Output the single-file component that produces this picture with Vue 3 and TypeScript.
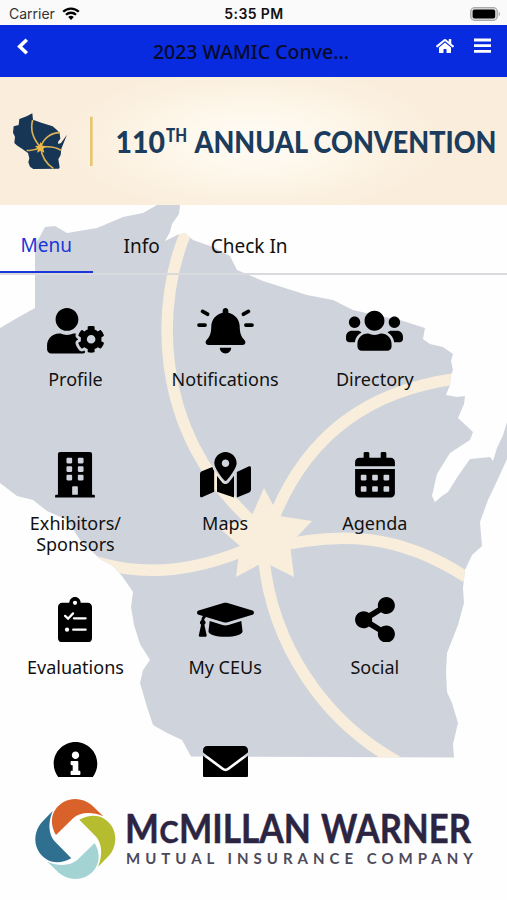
<script setup lang="ts">
interface Tile {
  label: string
  width: number
  box: string
  paths?: string[]
  kind?: 'bell' | 'clipboard'
}

const square = (x: number, y: number): string =>
  `M${x} ${y + 12}c0-6.6 5.4-12 12-12h40c6.6 0 12 5.4 12 12v40c0 6.6-5.4 12-12 12h-40c-6.6 0-12-5.4-12-12z`

const calendar =
  'M0 464c0 26.5 21.5 48 48 48h352c26.5 0 48-21.5 48-48V192H0z' +
  [64, 192, 320].map((x) => square(x, 256) + square(x, 384)).join('') +
  'M400 64h-48V16c0-8.8-7.2-16-16-16h-32c-8.8 0-16 7.2-16 16v48H160V16c0-8.8-7.2-16-16-16h-32c-8.8 0-16 7.2-16 16v48H48C21.5 64 0 85.5 0 112v48h448v-48c0-26.5-21.5-48-48-48z'

const building =
  'M436 480h-20V24c0-13.255-10.745-24-24-24H56C42.745 0 32 10.745 32 24v456H12c-6.627 0-12 5.373-12 12v20h448v-20c0-6.627-5.373-12-12-12z' +
  'M256 480h-64v-84c0-6.627 5.373-12 12-12h40c6.627 0 12 5.373 12 12v84z' +
  [64, 160, 256].map((y) => square(128, y) + square(256, y)).join('')

const tiles: Tile[] = [
  {
    label: 'Profile',
    width: 57,
    box: '0 0 640 512',
    paths: [
      'M610.5 373.3c2.6-14.1 2.6-28.5 0-42.6l25.8-14.9c3-1.7 4.3-5.2 3.3-8.5-6.7-21.6-18.2-41.2-33.2-57.4-2.3-2.5-6-3.1-9-1.4l-25.8 14.9c-10.9-9.3-23.4-16.5-36.9-21.3v-29.8c0-3.4-2.4-6.4-5.7-7.1-22.3-5-45-4.8-66.2 0-3.3.7-5.7 3.7-5.7 7.1v29.8c-13.5 4.8-26 12-36.9 21.3l-25.8-14.9c-2.9-1.7-6.7-1.1-9 1.4-15 16.2-26.5 35.8-33.2 57.4-1 3.3.4 6.8 3.3 8.5l25.8 14.9c-2.6 14.1-2.6 28.5 0 42.6l-25.8 14.9c-3 1.7-4.3 5.2-3.3 8.5 6.7 21.6 18.2 41.1 33.2 57.4 2.3 2.5 6 3.1 9 1.4l25.8-14.9c10.9 9.3 23.4 16.5 36.9 21.3v29.8c0 3.4 2.4 6.4 5.7 7.1 22.3 5 45 4.8 66.2 0 3.3-.7 5.7-3.7 5.7-7.1v-29.8c13.5-4.8 26-12 36.9-21.3l25.8 14.9c2.9 1.7 6.7 1.1 9-1.4 15-16.2 26.5-35.8 33.2-57.4 1-3.3-.4-6.8-3.3-8.5l-25.8-14.9zM496 400.5c-26.8 0-48.5-21.8-48.5-48.5s21.8-48.5 48.5-48.5 48.5 21.8 48.5 48.5-21.7 48.5-48.5 48.5z',
      'M224 256c70.7 0 128-57.3 128-128S294.7 0 224 0 96 57.3 96 128s57.3 128 128 128zm201.2 226.5c-2.3-1.2-4.6-2.6-6.8-3.9l-7.9 4.6c-6 3.4-12.8 5.3-19.6 5.3-10.9 0-21.4-4.6-28.9-12.6-18.3-19.8-32.3-43.9-40.2-69.6-5.5-17.7 1.9-36.4 17.9-45.7l7.9-4.6c-.1-2.6-.1-5.2 0-7.8l-7.9-4.6c-16-9.2-23.4-28-17.9-45.7.9-2.9 2.2-5.8 3.2-8.7-3.8-.3-7.5-1.2-11.4-1.2h-16.7c-22.2 10.2-46.9 16-72.9 16s-50.6-5.8-72.9-16h-16.7C60.2 288 0 348.2 0 422.4V464c0 26.5 21.5 48 48 48h352c10.1 0 19.5-3.2 27.2-8.5-1.2-3.8-2-7.7-2-11.8v-9.2z',
    ],
  },
  { label: 'Notifications', width: 57, box: '0 0 640 512', kind: 'bell' },
  {
    label: 'Directory',
    width: 57,
    box: '0 0 640 512',
    paths: [
      'M96 224c35.3 0 64-28.7 64-64s-28.7-64-64-64-64 28.7-64 64 28.7 64 64 64zm448 0c35.3 0 64-28.7 64-64s-28.7-64-64-64-64 28.7-64 64 28.7 64 64 64zm32 32h-64c-17.6 0-33.5 7.1-45.1 18.6 40.3 22.1 68.9 62 75.1 109.4h66c17.7 0 32-14.3 32-32v-32c0-35.3-28.7-64-64-64zm-256 0c61.9 0 112-50.1 112-112S381.9 32 320 32 208 82.1 208 144s50.1 112 112 112zm76.8 32h-8.3c-20.8 10-43.9 16-68.5 16s-47.6-6-68.5-16h-8.3C179.6 288 128 339.6 128 403.2V432c0 26.5 21.5 48 48 48h288c26.5 0 48-21.5 48-48v-28.8c0-63.6-51.6-115.2-115.2-115.2zm-223.7-13.4C161.5 263.1 145.6 256 128 256H64c-35.3 0-64 28.7-64 64v32c0 17.7 14.3 32 32 32h65.9c6.3-47.4 34.9-87.3 75.2-109.4z',
    ],
  },
  { label: 'Exhibitors/\nSponsors', width: 40, box: '0 0 448 512', paths: [building] },
  {
    label: 'Maps',
    width: 51,
    box: '0 0 576 512',
    paths: [
      'M288 0c-69.59 0-126 56.41-126 126 0 56.26 82.35 158.8 113.9 196.02 6.39 7.54 17.82 7.54 24.2 0C331.65 284.8 414 182.26 414 126 414 56.41 357.59 0 288 0zm0 168c-23.2 0-42-18.8-42-42s18.8-42 42-42 42 18.8 42 42-18.8 42-42 42zM20.12 215.95A32.006 32.006 0 0 0 0 245.66v250.32c0 11.32 11.43 19.06 21.94 14.86L160 448V214.92c-8.84-15.98-16.07-31.54-21.25-46.42L20.12 215.95zM288 359.67c-14.07 0-27.38-6.18-36.51-16.96-19.66-23.2-40.57-49.62-59.49-76.72v182l192 64V266c-18.92 27.09-39.82 53.52-59.49 76.72-9.13 10.77-22.44 16.95-36.51 16.95zm266.06-198.51L416 224v288l139.88-55.95A31.996 31.996 0 0 0 576 426.34V176.02c0-11.32-11.43-19.06-21.94-14.86z',
    ],
  },
  { label: 'Agenda', width: 40, box: '0 0 448 512', paths: [calendar] },
  { label: 'Evaluations', width: 34, box: '0 0 384 512', kind: 'clipboard' },
  {
    label: 'My CEUs',
    width: 57,
    box: '0 0 640 512',
    paths: [
      'M622.34 153.2L343.4 67.5c-15.2-4.67-31.6-4.67-46.79 0L17.66 153.2c-23.54 7.23-23.54 38.36 0 45.59l48.63 14.94c-10.67 13.19-17.23 29.28-17.88 46.9C38.78 266.15 32 276.11 32 288c0 10.78 5.68 19.85 13.86 25.65L20.33 428.53C18.11 438.52 25.71 448 35.94 448h56.11c10.24 0 17.84-9.48 15.62-19.47L82.14 313.65C90.32 307.85 96 298.78 96 288c0-11.57-6.47-21.25-15.66-26.87.76-15.02 8.44-28.3 20.69-36.72L296.6 284.5c9.06 2.78 26.44 6.25 46.79 0l278.95-85.7c23.55-7.24 23.55-38.36 0-45.6zM352.79 315.09c-28.53 8.76-52.84 3.92-65.59 0l-145.02-44.55L128 384c0 35.35 85.96 64 192 64s192-28.65 192-64l-14.18-113.47-145.03 44.56z',
    ],
  },
  {
    label: 'Social',
    width: 40,
    box: '0 0 448 512',
    paths: [
      'M352 320c-22.608 0-43.387 7.819-59.79 20.895l-102.486-64.054a96.551 96.551 0 0 0 0-41.683l102.486-64.054C308.613 184.181 329.392 192 352 192c53.019 0 96-42.981 96-96S405.019 0 352 0s-96 42.981-96 96c0 7.158.79 14.13 2.276 20.841L155.79 180.895C139.387 167.819 118.608 160 96 160c-53.019 0-96 42.981-96 96s42.981 96 96 96c22.608 0 43.387-7.819 59.79-20.895l102.486 64.054A96.301 96.301 0 0 0 256 416c0 53.019 42.981 96 96 96s96-42.981 96-96-42.981-96-96-96z',
    ],
  },
  {
    label: '',
    width: 45,
    box: '0 0 512 512',
    paths: [
      'M256 8C119.043 8 8 119.083 8 256c0 136.997 111.043 248 248 248s248-111.003 248-248C504 119.083 392.957 8 256 8zm0 110c23.196 0 42 18.804 42 42s-18.804 42-42 42-42-18.804-42-42 18.804-42 42-42zm56 254c0 6.627-5.373 12-12 12h-88c-6.627 0-12-5.373-12-12v-24c0-6.627 5.373-12 12-12h12v-64h-12c-6.627 0-12-5.373-12-12v-24c0-6.627 5.373-12 12-12h64c6.627 0 12 5.373 12 12v100h12c6.627 0 12 5.373 12 12v24z',
    ],
  },
  {
    label: '',
    width: 45,
    box: '0 0 512 512',
    paths: [
      'M48 54C21.5 54 0 75.500 0 102v18c0 6 3 11 8 15L236.800 303.600c11.400 8.500 27 8.500 38.400 0L504 135c5-4 8-9 8-15v-18c0-26.500-21.500-48-48-48H48zM0 166V384c0 35.300 28.700 64 64 64H448c35.300 0 64-28.700 64-64V166L294.400 327.200c-22.800 17.100-54 17.100-76.800 0L0 166z',
    ],
  },
]

const swirl = [
  { color: '#d9622b', turn: 0 },
  { color: '#b5bd2e', turn: 90 },
  { color: '#a3d3d3', turn: 180 },
  { color: '#2f6f8f', turn: 270 },
]
</script>

<template>
  <div class="screen">
    <div class="status">
      <div class="carrier">
        <span>Carrier</span>
        <svg class="wifi" viewBox="0 0 18 13">
          <path d="M9 13 6.200 10.100a4 4 0 0 1 5.600 0z" />
          <path class="arc" d="M4 7.800a7.100 7.100 0 0 1 10 0M1.200 4.800a11 11 0 0 1 15.600 0" />
        </svg>
      </div>
      <div class="clock">5:35 PM</div>
      <svg class="battery" viewBox="0 0 31 14">
        <rect x=".7" y=".7" width="26.600" height="12.600" rx="4" fill="#ddd" stroke="#aaa" stroke-width="1.300" />
        <rect x="2.600" y="2.600" width="22.600" height="8.800" rx="2" />
        <path d="M28.700 4.500q2.500 2.500 0 5z" fill="#aaa" />
      </svg>
    </div>

    <header class="bar">
      <svg class="back" viewBox="0 0 13 17"><path d="M10.800 1.800 3.700 8.500l7.100 6.700" /></svg>
      <h1>2023 WAMIC Conve...</h1>
      <svg class="home" viewBox="0 0 576 512">
        <path
          d="M280.37 148.26L96 300.11V464a16 16 0 0 0 16 16l112.06-.29a16 16 0 0 0 15.92-16V368a16 16 0 0 1 16-16h64a16 16 0 0 1 16 16v95.64a16 16 0 0 0 16 16.05L464 480a16 16 0 0 0 16-16V300L295.67 148.26a12.19 12.19 0 0 0-15.3 0zM571.6 251.47L488 182.56V44.05a12 12 0 0 0-12-12h-56a12 12 0 0 0-12 12v72.61L318.47 43a48 48 0 0 0-61 0L4.34 251.47a12 12 0 0 0-1.600 16.900l25.500 31A12 12 0 0 0 45.150 301l235.220-193.740a12.190 12.190 0 0 1 15.300 0L530.900 301a12 12 0 0 0 16.900-1.600l25.500-31a12 12 0 0 0-1.700-16.930z"
        />
      </svg>
      <svg class="bars" viewBox="0 0 17 14">
        <path d="M0 1.500h17M0 7.200h17M0 12.900h17" />
      </svg>
    </header>

    <section class="banner">
      <svg viewBox="0 0 507 128">
        <g transform="translate(0 3) scale(.3333)">
          <path
            d="M41 139 56 135 58 117 80 109 97 100 99 119 124 128 158 139 171 150 179 160 181 176 174 186 175 192 183 189 201 164 193 184 184 206 182 225 175 238 179 262 177 266 100 267 90 260 85 247 88 235 84 219 66 206 52 197 43 189 45 170 39 158z"
            fill="#173656"
          />
          <path
            d="M98 120C90 150 100 178 122 202M122 202C130 175 152 158 180 158M80 211C96 213 110 209 122 202C142 199 166 200 183 211M122 202C125 228 140 252 160 265"
            fill="none"
            stroke="#dcb155"
            stroke-width="5"
          />
          <path d="m122 186 5 11 11 1-8 8 3 12-11-6-11 6 3-12-9-8 12-1z" fill="#efb949" />
          <rect x="270" y="110" width="8" height="148" fill="#e9c56f" />
        </g>
        <text x="115.500" y="75.500" font-size="30.500" textLength="49.500" lengthAdjust="spacingAndGlyphs">110</text>
        <text x="166" y="65" font-size="18" textLength="21" lengthAdjust="spacingAndGlyphs">TH</text>
        <text x="194.500" y="75.500" font-size="30.500" textLength="302" lengthAdjust="spacingAndGlyphs">ANNUAL CONVENTION</text>
      </svg>
    </section>

    <main class="content">
      <svg class="backdrop" viewBox="0 205 507 572">
        <defs>
          <clipPath id="state">
            <path
              d="M157 205H180L179 214 172 224 170 232 165 241 177 235 185 233 193 240 213 247 230 256 237 270 263 281 307 295 333 300 353 310 375 315 400 320 425 328 423 339 430 344 443 347 453 354 451 361 453 370 451 375 450 385 446 395 457 397 465 396 464 404 458 418 473 432 470 440 450 453 437 474 432 496 435 502 442 496 448 492 458 476 470 459 490 457 493 461 497 448 503 435 507 422V459L497 481 488 500 480 522 482 546 472 555 465 570 463 588 464 603 458 625 447 653 446 672 447 692 452 703 458 723 453 744 454 757.500 191 756.500 182 740 167 733 153 725 147 707 140 683 143 670 150 660 140 644 134 625 131 607 133 592 122 576 113 566 100 559 80 540 67 520 47 511 33 500 17 496 0 483V328L17 318 35 308V244L39 238 45 227 55 226 67 233 97 228 123 217 143 213z"
            />
          </clipPath>
        </defs>
        <g clip-path="url(#state)">
          <rect x="0" y="205" width="507" height="572" fill="#cfd4dc" />
          <path
            d="M187 230C158 295 146 430 257 526M454 379C375 390 310 430 275 515M265 549C340 530 400 534 466 577M96 562C150 578 200 570 255 546M264 560C272 640 320 720 400 763"
            fill="none"
            stroke="#f9eedc"
            stroke-width="11.500"
          />
          <path d="m264 488 15 28 33 5-22 23 4 33-30-15-28 15 4-31-23-20 33-6z" fill="#f9eedc" />
        </g>
      </svg>

      <nav class="tabs">
        <a class="tab active">Menu</a>
        <a class="tab">Info</a>
        <a class="tab">Check In</a>
      </nav>

      <div class="grid">
        <div v-for="(tile, i) in tiles" :key="i" class="tile">
          <svg class="icon" :viewBox="tile.box" :style="{ width: tile.width + 'px' }">
            <template v-if="tile.kind === 'bell'">
              <path
                transform="translate(96)"
                d="M224 512c35.320 0 63.970-28.650 63.970-64H160.030c0 35.350 28.650 64 63.970 64zm215.390-149.710c-19.320-20.760-55.470-51.990-55.470-154.290 0-77.700-54.480-139.900-127.940-155.160V32c0-17.670-14.320-32-31.980-32s-31.980 14.330-31.980 32v20.840C118.560 68.100 64.080 130.300 64.080 208c0 102.300-36.150 133.530-55.470 154.290-6 6.450-8.660 14.160-8.610 21.710.110 16.400 12.980 32 32.100 32h383.800c19.120 0 32-15.600 32.100-32 .050-7.550-2.610-15.270-8.610-21.710z"
              />
              <path class="rays" d="M22 192H90M550 192h68M62 38l56 32M578 38l-56 32" />
            </template>
            <template v-else-if="tile.kind === 'clipboard'">
              <path
                fill-rule="evenodd"
                d="M336 64h-80c0-35.300-28.700-64-64-64s-64 28.700-64 64H48C21.500 64 0 85.500 0 112v352c0 26.500 21.500 48 48 48h288c26.500 0 48-21.500 48-48V112c0-26.500-21.500-48-48-48zM192 40a24 24 0 1 1 0 48 24 24 0 0 1 0-48z"
              />
              <path class="lines" d="M80 212l34 32 56-60M180 240h132M172 368h140" />
              <circle cx="102" cy="368" r="24" fill="#fff" />
            </template>
            <template v-else>
              <path v-for="(d, n) in tile.paths" :key="n" :d="d" fill-rule="evenodd" />
            </template>
          </svg>
          <span v-if="tile.label" class="label">{{ tile.label }}</span>
        </div>
      </div>
    </main>

    <footer class="sponsor">
      <svg viewBox="0 0 507 123">
        <g transform="translate(20 3) scale(.3333)">
          <path
            v-for="s in swirl"
            :key="s.turn"
            :fill="s.color"
            :transform="`rotate(${s.turn} 166 177)`"
            d="M108 165C84 122 98 84 132 65C160 51 192 56 215 75L250 109C214 94 181 97 160 114z"
          />
        </g>
        <g class="brand">
          <text x="125" y="66" font-size="40.500" textLength="34" lengthAdjust="spacingAndGlyphs">M</text>
          <text x="159.500" y="66" font-size="30" textLength="19" lengthAdjust="spacingAndGlyphs">C</text>
          <text x="179" y="66" font-size="40.500" textLength="132" lengthAdjust="spacingAndGlyphs">MILLAN</text>
          <text x="321" y="66" font-size="40.500" textLength="150" lengthAdjust="spacingAndGlyphs">WARNER</text>
        </g>
        <text class="tagline" x="126" y="86.500" textLength="347">MUTUAL INSURANCE COMPANY</text>
      </svg>
    </footer>
  </div>
</template>

<style>
body {
  margin: 0;
  background: #fefefe;
}
</style>

<style scoped>
.screen {
  width: 507px;
  height: 900px;
  display: flex;
  flex-direction: column;
  overflow: hidden;
  background: #fefefe;
  color: #111;
  font-family: 'Noto Sans', 'Open Sans', sans-serif;
}
svg {
  display: block;
  flex: none;
}
.status {
  height: 25px;
  flex: none;
  display: grid;
  grid-template-columns: 1fr auto 1fr;
  align-items: center;
  padding: 2px 6px 0 9px;
  box-sizing: border-box;
  background: #fafafa;
  font: 14px/20px Inter, sans-serif;
}
.carrier {
  display: flex;
  align-items: center;
  gap: 7px;
  color: #333;
}
.wifi {
  width: 18px;
  height: 13px;
}
.arc {
  fill: none;
  stroke: #000;
  stroke-width: 2.3;
}
.clock {
  padding-right: 2px;
  font-weight: 600;
  letter-spacing: 0.4px;
}
.battery {
  width: 31px;
  height: 14px;
  justify-self: end;
}
.bar {
  height: 52px;
  flex: none;
  display: flex;
  align-items: flex-start;
  box-sizing: border-box;
  padding: 13px 16px 0 17px;
  background: #082bdf;
}
.back {
  width: 13px;
  height: 17px;
  margin-left: -1px;
  fill: none;
  stroke: #fff;
  stroke-width: 3.6;
}
.bar h1 {
  flex: 1;
  margin: 0 0 0 37px;
  padding-top: 1px;
  text-align: center;
  font-size: 19.5px;
  line-height: 26px;
  font-weight: 500;
  color: #060a2c;
}
.home {
  width: 18px;
  height: 16px;
  fill: #fff;
}
.bars {
  width: 17px;
  height: 15px;
  margin-left: 20px;
  stroke: #fff;
  stroke-width: 2.8;
}
.banner {
  height: 128px;
  flex: none;
  background: radial-gradient(ellipse 190px 75px at 50% 50%, #fffdf7, #fdf5e7 55%, #faeddb 100%);
}
.banner text {
  font-family: Lato, sans-serif;
  font-weight: 900;
  fill: #1b3c5c;
}
.content {
  position: relative;
  height: 572px;
  flex: none;
  overflow: hidden;
}
.backdrop {
  position: absolute;
  inset: 0;
  width: 507px;
  height: 572px;
}
.tabs {
  position: relative;
  display: flex;
  height: 70px;
  box-sizing: border-box;
  border-bottom: 2px solid #d9dadd;
  font-size: 19px;
  line-height: 25px;
}
.tab {
  box-sizing: border-box;
  height: 68px;
  padding: 29px 20px 0 31px;
}
.tab.active {
  width: 92.5px;
  padding: 28px 0 0 20.5px;
  border-bottom: 2px solid #1b36d8;
  color: #1b36d8;
}
.grid {
  position: relative;
  display: grid;
  grid-template-columns: repeat(3, 149.700px);
  grid-auto-rows: 144.300px;
  padding: 33px 0 0 0.6px;
}
.tile {
  display: flex;
  flex-direction: column;
  align-items: center;
}
.icon {
  height: 45.500px;
}
.rays {
  fill: none;
  stroke: #000;
  stroke-width: 42;
  stroke-linecap: round;
}
.lines {
  fill: none;
  stroke: #fff;
  stroke-width: 26;
  stroke-linecap: round;
}
.label {
  margin-top: 15px;
  font-size: 18px;
  line-height: 21px;
  text-align: center;
  white-space: pre;
}
.sponsor {
  height: 123px;
  flex: none;
}
.brand {
  font-family: Lato, sans-serif;
  font-weight: 700;
  fill: #2c2541;
  stroke: #2c2541;
  stroke-width: 0.5;
}
.tagline {
  font: 700 15px Lato, sans-serif;
  fill: #4c4a5b;
}
</style>
